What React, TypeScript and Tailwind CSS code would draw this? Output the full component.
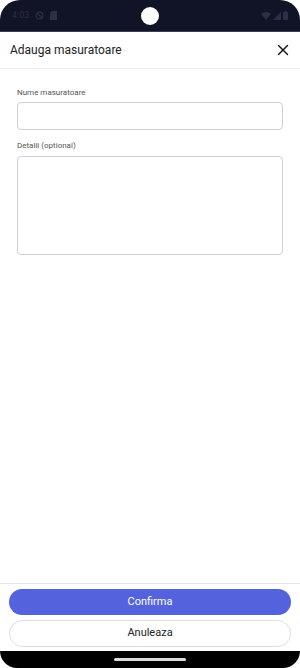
import { X } from "lucide-react";

function StatusBar() {
  return (
    <div className="relative h-[32px] bg-[#111326] rounded-t-[20px] border-b border-[#3a3d4d] flex items-center justify-between px-[12px]">
      <div className="flex items-center gap-[6px] text-[9px] text-[#2c2f45]">
        <span>4:03</span>
        {/* dnd-like icon */}
        <svg width="9" height="9" viewBox="0 0 10 10">
          <circle cx="5" cy="5" r="3.8" fill="none" stroke="#2c2f45" strokeWidth="1.3" />
          <path d="M2.5 2.5 L7.5 7.5" stroke="#2c2f45" strokeWidth="1.3" />
        </svg>
        <svg width="7" height="9" viewBox="0 0 7 9">
          <path d="M2 0 H7 V9 H0 V2 Z" fill="#2c2f45" />
        </svg>
      </div>
      <div className="absolute left-1/2 top-[7px] -translate-x-1/2 w-[18px] h-[18px] rounded-full bg-white" />
      <div className="flex items-center gap-[2px]">
        <svg width="10" height="8" viewBox="0 0 10 8">
          <path d="M0 1.5 Q5 -1.5 10 1.5 L5 8 Z" fill="#2c2f45" />
        </svg>
        <svg width="8" height="8" viewBox="0 0 8 8">
          <path d="M8 0 V8 H0 Z" fill="#2c2f45" />
        </svg>
        <svg width="5" height="9" viewBox="0 0 5 9">
          <rect x="0" y="1" width="5" height="8" rx="0.8" fill="#2c2f45" />
          <rect x="1.5" y="0" width="2" height="1.5" fill="#2c2f45" />
        </svg>
      </div>
    </div>
  );
}

export default function App() {
  return (
    <div
      className="w-[300px] h-[668px] bg-white flex flex-col overflow-hidden"
      style={{ fontFamily: "Roboto, 'Liberation Sans', sans-serif" }}
    >
      <StatusBar />

      {/* Header */}
      <div className="h-[37px] flex items-center justify-between pl-[10px] pr-[8px] border-b border-[#ececf0]">
        <h1 className="text-[12px] text-[#222] font-normal">Adauga masuratoare</h1>
        <X size={18} strokeWidth={1.9} className="text-[#111]" />
      </div>

      {/* Form */}
      <div className="flex-1 px-[17px] pt-[19px]">
        <label className="block text-[8px] text-[#555] leading-[10px] mb-[4px]">
          Nume masuratoare
        </label>
        <input
          type="text"
          className="block w-full h-[28px] rounded-[4px] border border-[#cfd0d8] outline-none"
        />
        <label className="block text-[8px] text-[#555] leading-[10px] mt-[11px] mb-[5px]">
          Detalii (optional)
        </label>
        <textarea className="block w-full h-[99px] rounded-[4px] border border-[#cfd0d8] outline-none resize-none" />
      </div>

      {/* Footer */}
      <div className="border-t border-[#e6e6ea] px-[9px] pt-[5px] pb-[4px] flex flex-col gap-[5px]">
        <button className="h-[26px] w-full rounded-full bg-[#5463dd] text-white text-[11px]">
          Confirma
        </button>
        <button className="h-[27px] w-full rounded-full border border-[#dcdce2] bg-white text-[#222] text-[11px]">
          Anuleaza
        </button>
      </div>

      {/* Nav bar */}
      <div className="h-[17px] bg-black rounded-b-[20px] flex justify-center pt-[7px]">
        <div className="w-[72px] h-[3px] rounded-full bg-[#dcdcdc]" />
      </div>
    </div>
  );
}
